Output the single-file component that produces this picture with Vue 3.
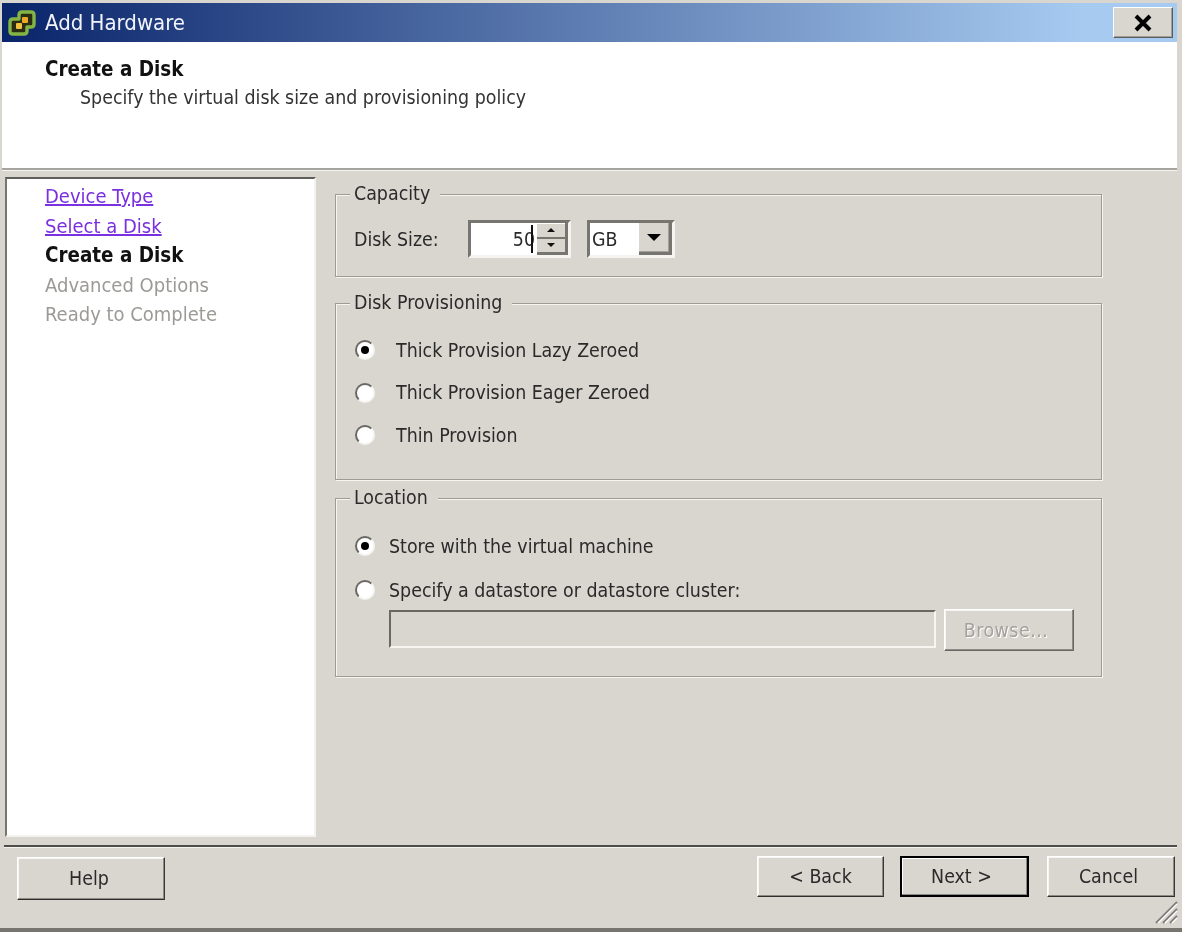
<script setup>
const steps = [
  { label: 'Device Type', kind: 'visited' },
  { label: 'Select a Disk', kind: 'visited' },
  { label: 'Create a Disk', kind: 'current' },
  { label: 'Advanced Options', kind: 'pending' },
  { label: 'Ready to Complete', kind: 'pending' }
]
const provisioning = [
  { label: 'Thick Provision Lazy Zeroed', on: true },
  { label: 'Thick Provision Eager Zeroed', on: false },
  { label: 'Thin Provision', on: false }
]
</script>

<template>
  <div class="window">
    <header class="titlebar">
      <svg class="logo" viewBox="0 0 28 28" width="28" height="28">
        <path d="M14 3 H23 Q26 3 26 6 V15 Q26 18 23 18 H19 V22 Q19 25 16 25 H5 Q2 25 2 22 V13 Q2 10 5 10 H11 V6 Q11 3 14 3 Z" fill="#2b2c14" stroke="#84b544" stroke-width="3.4" stroke-linejoin="round" />
        <rect x="14" y="8" width="6" height="6" rx="1" fill="#e8a828" />
        <rect x="8" y="14" width="6" height="6" rx="1" fill="#f4c040" />
      </svg>
      <span class="title">Add Hardware</span>
      <button class="close" type="button">
        <svg viewBox="0 0 20 18" width="20" height="18">
          <path d="M3 2 L17 16 M17 2 L3 16" stroke="#000" stroke-width="4" fill="none" />
        </svg>
      </button>
    </header>

    <section class="banner">
      <h1>Create a Disk</h1>
      <p>Specify the virtual disk size and provisioning policy</p>
    </section>

    <div class="body">
      <nav class="steps">
        <div v-for="s in steps" :key="s.label" class="step" :class="s.kind">{{ s.label }}</div>
      </nav>

      <main class="panel">
        <fieldset class="group capacity">
          <legend>Capacity</legend>
          <div class="size-row">
            <label>Disk Size:</label>
            <div class="spin">
              <span class="spin-value">50</span><i class="caret"></i>
              <div class="spin-btns">
                <span class="arrow up"></span>
                <span class="arrow down"></span>
              </div>
            </div>
            <div class="combo">
              <span class="combo-value">GB</span>
              <span class="combo-btn"><i></i></span>
            </div>
          </div>
        </fieldset>

        <fieldset class="group provisioning">
          <legend>Disk Provisioning</legend>
          <div v-for="p in provisioning" :key="p.label" class="radio-row">
            <span class="radio" :class="{ on: p.on }"></span>
            <span>{{ p.label }}</span>
          </div>
        </fieldset>

        <fieldset class="group location">
          <legend>Location</legend>
          <div class="radio-row">
            <span class="radio on"></span>
            <span>Store with the virtual machine</span>
          </div>
          <div class="radio-row">
            <span class="radio"></span>
            <span>Specify a datastore or datastore cluster:</span>
          </div>
          <div class="ds-row">
            <div class="ds-input"></div>
            <button class="btn browse" type="button">Browse...</button>
          </div>
        </fieldset>
      </main>
    </div>

    <footer class="footer">
      <button class="btn help" type="button">Help</button>
      <div class="nav-btns">
        <button class="btn back" type="button">&lt; Back</button>
        <button class="btn default" type="button">Next &gt;</button>
        <button class="btn cancel" type="button">Cancel</button>
      </div>
      <svg class="grip" viewBox="0 0 24 24" width="24" height="24">
        <path d="M2 23 L23 2 M9 23 L23 9 M16 23 L23 16" stroke="#7d7b76" stroke-width="1.8" fill="none" />
        <path d="M4 23 L23 4 M11 23 L23 11 M18 23 L23 18" stroke="#fff" stroke-width="1.2" fill="none" />
      </svg>
    </footer>
  </div>
</template>

<style scoped>
.window {
  position: relative;
  width: 1182px;
  height: 932px;
  box-sizing: border-box;
  padding: 3px 5px 0 2px;
  background: #d9d6d0;
  border-bottom: 4px solid #77756f;
  overflow: hidden;
  display: flex;
  flex-direction: column;
  font-family: "DejaVu Sans", "Noto Sans", sans-serif;
  font-stretch: condensed;
  font-size: 19.4px;
  color: #2a2a2a;
  filter: blur(0.4px);
}
.titlebar {
  flex: none;
  height: 39px;
  display: flex;
  align-items: center;
  padding-left: 6px;
  box-sizing: border-box;
  background: linear-gradient(90deg, #0a246a 0%, #a6caf0 92%);
  background-color: #0a246a;
}
.logo { flex: none; margin-right: 9px; }
.title { color: #f2f4fa; font-size: 22px; flex: 1; }
.close {
  flex: none;
  width: 60px;
  height: 31px;
  margin-right: 4px;
  padding: 0;
  display: flex;
  align-items: center;
  justify-content: center;
  background: #d9d6d0;
  border: 1px solid;
  border-color: #fff #5e5c58 #5e5c58 #fff;
  box-shadow: inset -1px -1px 0 #a09e98;
}
.banner {
  flex: none;
  height: 128px;
  box-sizing: border-box;
  background: #fff;
  border-bottom: 2px solid #a6a49f;
  padding: 16px 0 0 43px;
  box-shadow: 0 1px 0 #f5f4f1;
}
.banner h1 {
  margin: 0;
  font-size: 20.4px;
  line-height: 22px;
  font-weight: 700;
  color: #111;
}
.banner p {
  margin: 7px 0 0 35px;
  line-height: 22px;
  color: #333;
}
.body {
  flex: none;
  height: 675px;
  display: flex;
  padding: 7px 0 0 3px;
  box-sizing: border-box;
}
.steps {
  flex: none;
  width: 311px;
  height: 660px;
  box-sizing: border-box;
  background: #fff;
  border: 2px solid;
  border-color: #5f5d59 #f3f2ef #f3f2ef #77756f;
  padding: 3px 0 0 38px;
  font-size: 20px;
}
.step { height: 29.5px; line-height: 29.5px; white-space: nowrap; }
.visited { color: #7a2fe0; text-decoration: underline; }
.current { color: #111; font-weight: 700; font-size: 20.4px; }
.pending { color: #9c9a96; }
.panel {
  flex: none;
  width: 767px;
  margin-left: 19px;
  display: flex;
  flex-direction: column;
}
.group {
  margin: 0;
  min-width: 0;
  box-sizing: border-box;
  border: 1px solid #9d9b96;
  box-shadow: inset 1px 1px 0 #f6f5f2, 1px 1px 0 #f6f5f2;
  padding: 0 0 0 18px;
}
.group legend {
  padding: 0 10px 0 4px;
  margin-left: -4px;
  line-height: 22px;
  background: #d9d6d0;
}
.capacity { height: 94px; margin-top: 6px; }
.provisioning { height: 188px; margin-top: 15px; }
.location { height: 190px; margin-top: 7px; }
.size-row { display: flex; align-items: center; height: 38px; margin-top: 15px; }
.size-row label { width: 114px; }
.spin {
  flex: none;
  width: 103px;
  height: 38px;
  box-sizing: border-box;
  background: #fff;
  border: 3px solid;
  border-color: #77756f #f5f4f1 #f5f4f1 #77756f;
  display: flex;
  align-items: center;
  justify-content: flex-end;
}
.caret { width: 2px; height: 28px; background: #111; margin: 0 4px 0 -4px; }
.spin-btns {
  flex: none;
  width: 31px;
  height: 100%;
  box-sizing: border-box;
  background: #d9d6d0;
  border-right: 3px solid #77756f;
  border-bottom: 3px solid #77756f;
  display: flex;
  flex-direction: column;
}
.arrow { flex: 1; display: flex; align-items: center; justify-content: center; }
.arrow.up { border-bottom: 2px solid #77756f; box-shadow: inset 0 1px 0 #fff; }
.arrow::before { content: ""; border-left: 4px solid transparent; border-right: 4px solid transparent; }
.arrow.up::before { border-bottom: 4px solid #111; }
.arrow.down::before { border-top: 4px solid #111; }
.combo {
  flex: none;
  width: 88px;
  height: 38px;
  margin-left: 16px;
  box-sizing: border-box;
  background: #fff;
  border: 3px solid;
  border-color: #77756f #f5f4f1 #f5f4f1 #77756f;
  display: flex;
  align-items: center;
}
.combo-value { flex: 1; padding-left: 2px; font-size: 19.4px; }
.combo-btn {
  flex: none;
  width: 33px;
  height: 100%;
  box-sizing: border-box;
  background: #d9d6d0;
  border-right: 3px solid #77756f;
  border-bottom: 3px solid #77756f;
  box-shadow: inset -1px -1px 0 #a3a19c;
  display: flex;
  align-items: center;
  justify-content: center;
}
.combo-btn i {
  border-left: 7px solid transparent;
  border-right: 7px solid transparent;
  border-top: 7px solid #000;
}
.radio-row {
  display: flex;
  align-items: center;
  white-space: nowrap;
}
.provisioning .radio-row { height: 42.5px; }
.location .radio-row { height: 44px; }
.provisioning .radio-row:first-of-type { margin-top: 15px; }
.location .radio-row:first-of-type { margin-top: 15px; }
.radio {
  flex: none;
  width: 20px;
  height: 20px;
  box-sizing: border-box;
  margin: 0 21px 0 1px;
  border-radius: 50%;
  background: #fff;
  border: 2px solid;
  border-color: #6a6864 #f6f5f2 #f6f5f2 #6a6864;
  display: flex;
  align-items: center;
  justify-content: center;
}
.location .radio { margin-right: 14px; }
.radio.on::before {
  content: "";
  width: 8px;
  height: 8px;
  border-radius: 50%;
  background: #000;
}
.ds-row { display: flex; margin: -2px 0 0 35px; }
.ds-input {
  width: 547px;
  height: 38px;
  box-sizing: border-box;
  border: 2px solid;
  border-color: #6a6864 #f6f5f2 #f6f5f2 #6a6864;
}
.btn {
  font: inherit;
  font-stretch: condensed;
  color: #2a2a2a;
  padding: 0;
  background: #d9d6d0;
  border: 1px solid;
  border-color: #fff #3a3936 #2f2e2c #fff;
  box-shadow: inset -1px -1px 0 #8c8a85, inset 1px 1px 0 #f6f5f2;
}
.browse {
  width: 130px;
  height: 42px;
  margin: -1px 0 0 8px;
  padding-right: 6px;
  letter-spacing: 0.5px;
  color: #a3a19c;
  text-shadow: 1px 1px 0 #fff;
  border-color: #fff #6a6864 #6a6864 #fff;
}
.footer {
  flex: none;
  position: relative;
  height: 83px;
  box-sizing: border-box;
  margin-left: 2px;
  border-top: 2px solid #4f4d49;
  box-shadow: inset 0 1px 0 #f4f3f0;
  display: flex;
  align-items: flex-start;
}
.help { width: 148px; height: 43px; margin: 10px 0 0 13px; padding-right: 4px; }
.nav-btns { margin-left: auto; display: flex; margin-top: 9px; margin-right: 2px; }
.nav-btns .btn { width: 128px; height: 41px; }
.nav-btns .back { width: 127px; margin-right: 16px; }
.nav-btns .cancel { padding-right: 5px; }
.nav-btns .default {
  width: 129px;
  margin-right: 18px;
  padding-right: 6px;
  border: 2px solid #000;
  box-shadow: inset -1px -1px 0 #8c8a85, inset 1px 1px 0 #fff;
}
.grip { position: absolute; right: -1px; bottom: 4px; }
</style>
